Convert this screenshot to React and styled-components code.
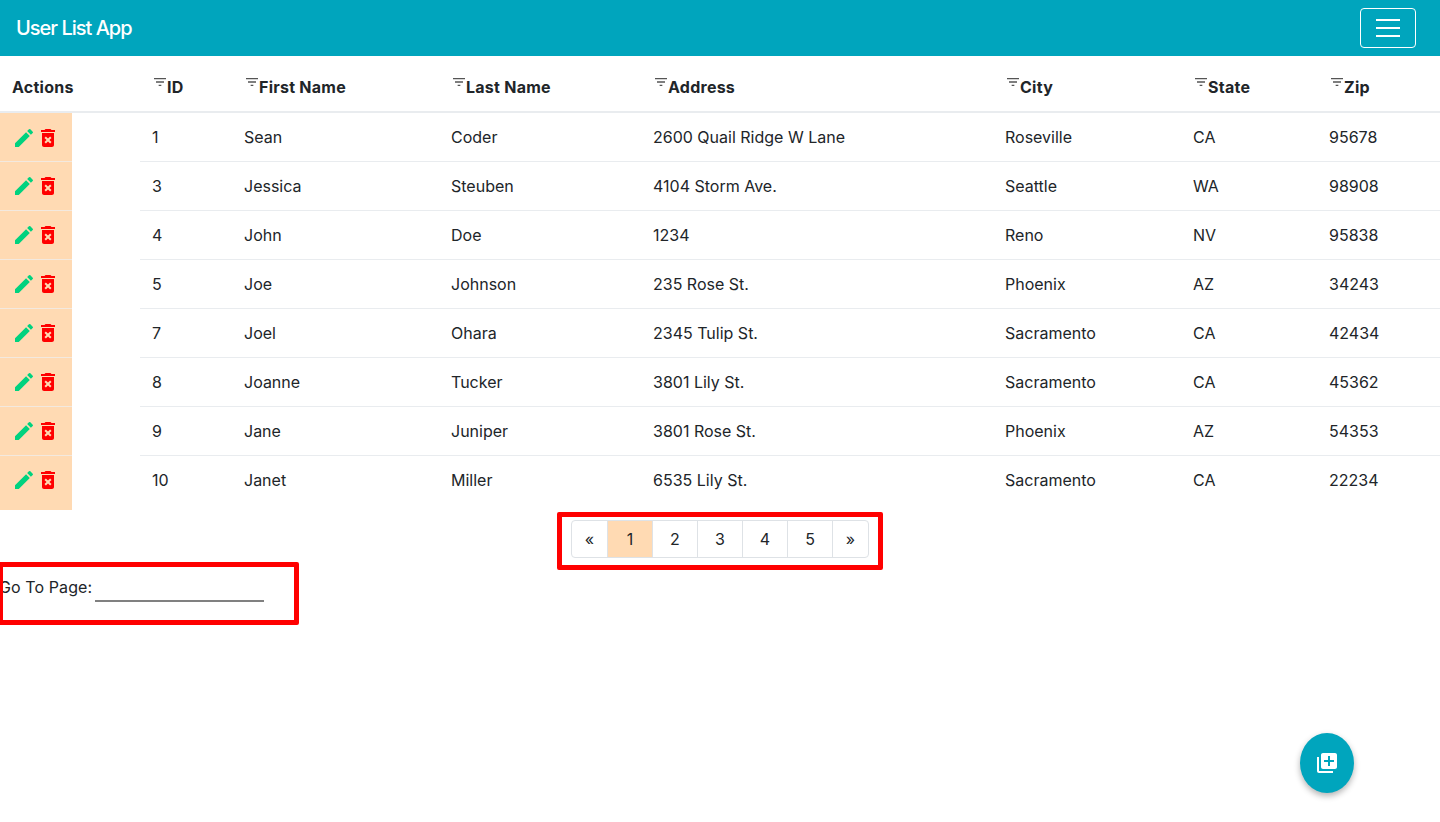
import React from 'react';
import styled, { createGlobalStyle } from 'styled-components';
import {
  MdFilterList, MdEdit, MdDeleteForever, MdLibraryAdd,
} from 'react-icons/md';

const TEAL = '#00a5bd';
const PEACH = '#ffdab3';

const COLUMNS = [
  { key: 'id', label: 'ID', width: 92 },
  { key: 'first', label: 'First Name', width: 207 },
  { key: 'last', label: 'Last Name', width: 202 },
  { key: 'address', label: 'Address', width: 352 },
  { key: 'city', label: 'City', width: 188 },
  { key: 'state', label: 'State', width: 136 },
  { key: 'zip', label: 'Zip', width: 123 },
];

const USERS = [
  { id: 1, first: 'Sean', last: 'Coder', address: '2600 Quail Ridge W Lane', city: 'Roseville', state: 'CA', zip: '95678' },
  { id: 3, first: 'Jessica', last: 'Steuben', address: '4104 Storm Ave.', city: 'Seattle', state: 'WA', zip: '98908' },
  { id: 4, first: 'John', last: 'Doe', address: '1234', city: 'Reno', state: 'NV', zip: '95838' },
  { id: 5, first: 'Joe', last: 'Johnson', address: '235 Rose St.', city: 'Phoenix', state: 'AZ', zip: '34243' },
  { id: 7, first: 'Joel', last: 'Ohara', address: '2345 Tulip St.', city: 'Sacramento', state: 'CA', zip: '42434' },
  { id: 8, first: 'Joanne', last: 'Tucker', address: '3801 Lily St.', city: 'Sacramento', state: 'CA', zip: '45362' },
  { id: 9, first: 'Jane', last: 'Juniper', address: '3801 Rose St.', city: 'Phoenix', state: 'AZ', zip: '54353' },
  { id: 10, first: 'Janet', last: 'Miller', address: '6535 Lily St.', city: 'Sacramento', state: 'CA', zip: '22234' },
];

const PAGES = ['«', '1', '2', '3', '4', '5', '»'];

const App = () => (
  <>
    <GlobalStyle />
    <Navbar>
      <Brand>User List App</Brand>
      <Toggler type="button" aria-label="Toggle navigation">
        <TogglerLine />
        <TogglerLine />
        <TogglerLine />
      </Toggler>
    </Navbar>

    <Table>
      <colgroup>
        <col width={140} />
        {COLUMNS.map(({ key, width }) => <col key={key} width={width} />)}
      </colgroup>
      <thead>
        <tr>
          <HeadCell>Actions</HeadCell>
          {COLUMNS.map(({ key, label }) => (
            <HeadCell key={key}>
              <FilterIcon />
              {label}
            </HeadCell>
          ))}
        </tr>
      </thead>
      <tbody>
        {USERS.map((user, index) => (
          <tr key={user.id}>
            <ActionCell>
              <ActionBox $last={index === USERS.length - 1}>
                <EditIcon />
                <DeleteIcon />
              </ActionBox>
            </ActionCell>
            {COLUMNS.map(({ key }) => <Cell key={key}>{user[key]}</Cell>)}
          </tr>
        ))}
      </tbody>
    </Table>

    <PaginationRow>
      <Pagination>
        <Highlight $inset="-9px -15px -13px" />
        {PAGES.map((page) => (
          <PageItem
            key={page}
            $active={page === '1'}
            $plain={page === '1' || page === '2'}
            $narrow={page === '«' || page === '»'}
          >
            {page}
          </PageItem>
        ))}
      </Pagination>
    </PaginationRow>

    <GoToPage>
      <Highlight $inset="0 0 0 -2px" />
      <GoToLabel htmlFor="goto">Go To Page:</GoToLabel>
      <GoToInput id="goto" type="text" />
    </GoToPage>

    <Fab type="button" aria-label="Add user">
      <MdLibraryAdd size={24} />
    </Fab>
  </>
);

const GlobalStyle = createGlobalStyle`
  body {
    margin: 0;
    font-family: Inter, "Liberation Sans", sans-serif;
    font-size: 16px;
    line-height: 24px;
    color: #212529;
    background: #fff;
  }
`;

const Navbar = styled.nav`
  display: flex;
  align-items: center;
  justify-content: space-between;
  height: 56px;
  padding: 0 24px 0 16px;
  box-sizing: border-box;
  background: ${TEAL};
`;

const Brand = styled.span`
  font-size: 20px;
  font-weight: 500;
  color: #fff;
  letter-spacing: -1px;
`;

const Toggler = styled.button`
  display: flex;
  flex-direction: column;
  align-items: center;
  justify-content: center;
  gap: 6px;
  width: 56px;
  height: 40px;
  padding: 0;
  background: transparent;
  border: 1px solid #fff;
  border-radius: 4px;
`;

const TogglerLine = styled.span`
  width: 24px;
  height: 2px;
  background: #fff;
`;

const Table = styled.table`
  width: 1440px;
  table-layout: fixed;
  border-collapse: separate;
  border-spacing: 0;
`;

const HeadCell = styled.th`
  height: 57px;
  padding: 12px;
  box-sizing: border-box;
  text-align: left;
  vertical-align: bottom;
  font-weight: 700;
  letter-spacing: 0.25px;
  border-bottom: 2px solid #e9ecef;
`;

const FilterIcon = styled(MdFilterList).attrs({ size: 16 })`
  color: #555;
  vertical-align: 3px;
  margin-right: -1px;
`;

const ActionCell = styled.td`
  padding: 0;
  height: 49px;
  vertical-align: top;
`;

const ActionBox = styled.div`
  display: flex;
  align-items: center;
  width: 72px;
  height: ${({ $last }) => ($last ? 54 : 49)}px;
  margin-bottom: ${({ $last }) => ($last ? -5 : 0)}px;
  padding: ${({ $last }) => ($last ? '0 0 6px 12px' : '0 0 0 12px')};
  box-sizing: border-box;
  background: ${PEACH};
  border-bottom: ${({ $last }) => ($last ? 'none' : '1px solid #f3e9df')};
  tr:first-child & {
    padding-top: 2px;
  }
`;

const EditIcon = styled(MdEdit).attrs({ size: 24 })`
  color: #00d27f;
`;

const DeleteIcon = styled(MdDeleteForever).attrs({ size: 24 })`
  color: #ff0000;
`;

const Cell = styled.td`
  height: 49px;
  padding: 12px;
  box-sizing: border-box;
  border-bottom: 1px solid #e9ecef;
  tr:last-child & {
    border-bottom-color: transparent;
  }
`;

const PaginationRow = styled.div`
  display: flex;
  justify-content: center;
  margin-top: 15px;
`;

const Pagination = styled.ul`
  position: relative;
  display: flex;
  height: 38px;
  margin: 0;
  padding: 0;
  list-style: none;
  box-sizing: border-box;
  border: 1px solid #dee2e6;
  border-radius: 4px;
`;

const PageItem = styled.li`
  width: ${({ $narrow }) => ($narrow ? 35 : 45)}px;
  box-sizing: border-box;
  line-height: 36px;
  text-align: center;
  background: ${({ $active }) => ($active ? PEACH : 'transparent')};
  & + & {
    border-left: ${({ $plain }) => ($plain ? 'none' : '1px solid #dee2e6')};
  }
  &:last-child {
    width: 36px;
  }
`;

const Highlight = styled.span`
  position: absolute;
  inset: ${({ $inset }) => $inset};
  border: 5px solid #ff0000;
  border-radius: 2px;
  pointer-events: none;
`;

const GoToPage = styled.div`
  position: relative;
  display: flex;
  align-items: flex-start;
  width: 299px;
  height: 63px;
  margin-top: 4px;
  padding-top: 13px;
  box-sizing: border-box;
`;

const GoToLabel = styled.label`
  margin-left: -1px;
  letter-spacing: 0.1px;
`;

const GoToInput = styled.input`
  width: 169px;
  height: 25px;
  margin-left: 3px;
  padding: 0;
  background: transparent;
  border: none;
  border-bottom: 2px solid #808080;
  outline: none;
`;

const Fab = styled.button`
  position: fixed;
  right: 86px;
  bottom: 29px;
  display: flex;
  align-items: center;
  justify-content: center;
  width: 54px;
  height: 60px;
  padding: 0;
  color: #fff;
  background: ${TEAL};
  border: none;
  border-radius: 50%;
  box-shadow: 0 3px 6px rgba(0, 0, 0, 0.3);
`;

export default App;
